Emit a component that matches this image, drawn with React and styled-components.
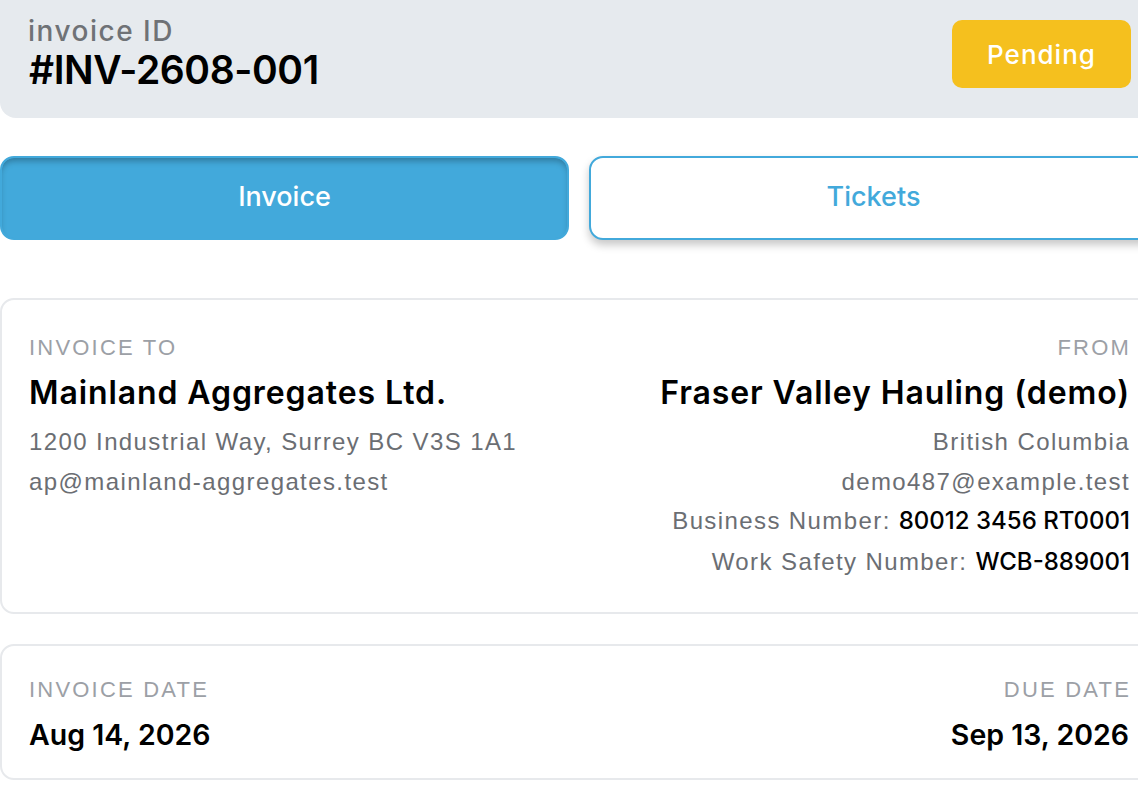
import styled, { createGlobalStyle } from 'styled-components';

const GlobalStyle = createGlobalStyle`
  html, body {
    margin: 0;
    padding: 0;
    background: #ffffff;
    overflow: hidden;
  }
  body {
    font-family: "Liberation Sans", Arial, sans-serif;
  }
`;

const heading = `"Inter", "Lato", sans-serif`;

const Page = styled.div`
  width: 1158px;
  display: flex;
  flex-direction: column;
`;

const Header = styled.header`
  background: #e6eaee;
  border-bottom-left-radius: 16px;
  border-bottom-right-radius: 16px;
  height: 118px;
  box-sizing: border-box;
  padding: 14px 27px 0 28px;
  display: flex;
  justify-content: space-between;
  align-items: flex-start;
`;

const IdBlock = styled.div`
  display: flex;
  flex-direction: column;
  font-family: ${heading};
`;

const IdLabel = styled.span`
  font-size: 28px;
  line-height: 34px;
  color: #6f7276;
  font-weight: 500;
  letter-spacing: 1.5px;
`;

const IdValue = styled.span`
  font-size: 39px;
  line-height: 44px;
  font-weight: 600;
  color: #000;
  letter-spacing: -0.4px;
  margin-left: 1px;
`;

const StatusBadge = styled.div`
  margin-top: 6px;
  width: 179px;
  height: 68px;
  border-radius: 10px;
  background: #f5c01e;
  color: #fff;
  font-family: ${heading};
  font-size: 26px;
  font-weight: 500;
  letter-spacing: 1px;
  display: flex;
  align-items: center;
  justify-content: center;
`;

const Tabs = styled.nav`
  display: grid;
  grid-template-columns: 1fr 1fr;
  gap: 20px;
  margin-top: 38px;
`;

const Tab = styled.button`
  height: 84px;
  border-radius: 14px;
  font-family: ${heading};
  font-size: 27px;
  font-weight: 500;
  cursor: pointer;
  border: 2px solid #42a9db;
  padding: 0 0 4px;
  background: ${p => (p.$active ? '#42a9db' : '#fff')};
  color: ${p => (p.$active ? '#fff' : '#42a9db')};
  box-shadow: ${p =>
    p.$active
      ? 'inset 0 5px 6px -2px rgba(0, 0, 0, 0.28)'
      : '0 5px 8px rgba(0, 0, 0, 0.22)'};
`;

const Card = styled.section`
  margin-top: ${p => p.$gap}px;
  border: 2px solid #e7e9ec;
  border-radius: 14px;
  padding: ${p => p.$pad};
  display: flex;
  justify-content: space-between;
  align-items: flex-start;
`;

const Column = styled.div`
  display: flex;
  flex-direction: column;
  align-items: ${p => (p.$right ? 'flex-end' : 'flex-start')};
  text-align: ${p => (p.$right ? 'right' : 'left')};
`;

const Label = styled.span`
  font-size: 22px;
  line-height: 28px;
  letter-spacing: 2.2px;
  text-transform: uppercase;
  color: #9ca0a6;
  margin-right: ${p => (p.$right ? -2 : 0)}px;
`;

const Name = styled.h2`
  margin: 12px 0 0;
  font-family: ${heading};
  font-size: 32px;
  line-height: 38px;
  font-weight: 600;
  letter-spacing: 0.9px;
  color: #000;
  margin-right: ${p => (p.$right ? -1 : 0)}px;
`;

const Detail = styled.div`
  font-size: 24px;
  line-height: ${p => p.$lh || 40}px;
  letter-spacing: 1.4px;
  color: #6b6e73;
  margin-top: ${p => p.$mt || 0}px;
  margin-right: ${p => (p.$right ? -1 : 0)}px;
`;

const Strong = styled.span`
  font-family: ${heading};
  font-weight: 500;
  letter-spacing: 0;
  color: #000;
`;

const DateValue = styled.div`
  margin-top: 14px;
  font-family: ${heading};
  font-size: 28.5px;
  line-height: 34px;
  font-weight: 600;
  color: #000;
`;

export default function App() {
  return (
    <Page>
      <GlobalStyle />
      <Header>
        <IdBlock>
          <IdLabel>invoice ID</IdLabel>
          <IdValue>#INV-2608-001</IdValue>
        </IdBlock>
        <StatusBadge>Pending</StatusBadge>
      </Header>

      <Tabs>
        <Tab $active>Invoice</Tab>
        <Tab>Tickets</Tab>
      </Tabs>

      <Card $gap={58} $pad="34px 27px 28px 27px">
        <Column>
          <Label>Invoice To</Label>
          <Name>Mainland Aggregates Ltd.</Name>
          <Detail $mt={10}>1200 Industrial Way, Surrey BC V3S 1A1</Detail>
          <Detail>ap@mainland-aggregates.test</Detail>
        </Column>
        <Column $right>
          <Label $right>From</Label>
          <Name $right>Fraser Valley Hauling (demo)</Name>
          <Detail $right $mt={10}>British Columbia</Detail>
          <Detail $right>demo487@example.test</Detail>
          <Detail $right $lh={38}>
            Business Number: <Strong>80012 3456 RT0001</Strong>
          </Detail>
          <Detail $right $lh={44}>
            Work Safety Number: <Strong>WCB-889001</Strong>
          </Detail>
        </Column>
      </Card>

      <Card $gap={30} $pad="30px 27px 26px 27px">
        <Column>
          <Label>Invoice Date</Label>
          <DateValue>Aug 14, 2026</DateValue>
        </Column>
        <Column $right>
          <Label $right>Due Date</Label>
          <DateValue>Sep 13, 2026</DateValue>
        </Column>
      </Card>
    </Page>
  );
}
